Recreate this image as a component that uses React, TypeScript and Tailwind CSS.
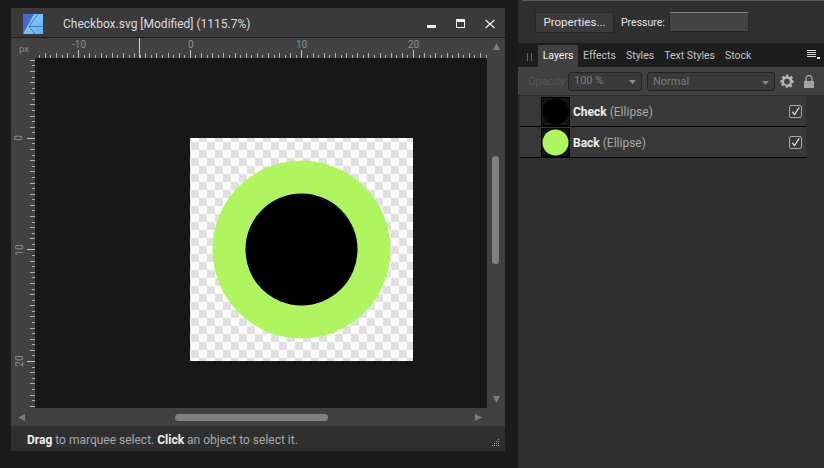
import React from "react";

const font = "font-['Roboto','Liberation_Sans',sans-serif]";
const unit = 11.157;

function HRuler() {
  const ticks: React.ReactNode[] = [];
  for (let i = -28; i <= 53; i++) {
    const x = 155.4 + (i * unit) / 2;
    if (x < 0 || x > 452) continue;
    const len = i % 20 === 0 ? 8 : i % 2 === 0 ? 5 : 3;
    ticks.push(<line key={i} x1={x} x2={x} y1={20 - len} y2={20} stroke={i % 20 === 0 ? "#c4c4c4" : "#b0b0b0"} />);
  }
  return (
    <svg width="452" height="20" shapeRendering="crispEdges" className="absolute left-0 top-0">
      {ticks}
      <line x1="104.5" x2="104.5" y1="0" y2="20" stroke="#cfcfcf" />
    </svg>
  );
}

function VRuler() {
  const ticks: React.ReactNode[] = [];
  for (let i = -14; i <= 48; i++) {
    const y = 80.4 + (i * unit) / 2;
    if (y < 0 || y > 350) continue;
    const len = i % 20 === 0 ? 8 : i % 2 === 0 ? 5 : 3;
    ticks.push(<line key={i} x1={24 - len} x2={24} y1={y} y2={y} stroke={i % 20 === 0 ? "#c4c4c4" : "#b0b0b0"} />);
  }
  return (
    <svg width="24" height="350" shapeRendering="crispEdges" className="absolute left-0 top-0">
      {ticks}
    </svg>
  );
}

function Artboard() {
  return (
    <svg width="223" height="223" className="absolute left-[155px] top-[80px]">
      <defs>
        <pattern id="chk" width="16" height="16" patternUnits="userSpaceOnUse" patternTransform="translate(9 -4)">
          <rect width="16" height="16" fill="#ffffff" />
          <rect width="8" height="8" fill="#e0e0e0" />
          <rect x="8" y="8" width="8" height="8" fill="#e0e0e0" />
        </pattern>
      </defs>
      <rect width="223" height="223" fill="url(#chk)" />
      <circle cx="111.5" cy="111.5" r="89" fill="#aef55f" />
      <circle cx="111.5" cy="111.5" r="56" fill="#000000" />
    </svg>
  );
}

function Logo() {
  return (
    <svg width="20" height="20" viewBox="0 0 20 20" className="shrink-0">
      <defs>
        <linearGradient id="lg" x1="0" y1="0" x2="1" y2="1">
          <stop offset="0" stopColor="#8fd0ff" />
          <stop offset="1" stopColor="#62aef5" />
        </linearGradient>
      </defs>
      <rect width="20" height="20" fill="url(#lg)" />
      <path d="M0 0H11L0 20Z" fill="#4469c9" />
      <path d="M15 0L6 12.5L12 20M6 12.5H20" fill="none" stroke="#3f78b8" strokeWidth="1" />
    </svg>
  );
}

function Tri({ dir, className }: { dir: "u" | "d" | "l" | "r"; className: string }) {
  const d = { u: "M0 7L3.5 0L7 7Z", d: "M0 0H7L3.5 7Z", l: "M7 0V7L0 3.5Z", r: "M0 0V7L7 3.5Z" }[dir];
  return (
    <svg width="7" height="7" viewBox="0 0 7 7" className={className}>
      <path d={d} fill="#7c7c7c" />
    </svg>
  );
}

function Caret() {
  return (
    <svg width="7" height="4" viewBox="0 0 7 4" className="shrink-0">
      <path d="M0 0H7L3.5 4Z" fill="#8a8a8a" />
    </svg>
  );
}

function Check() {
  return (
    <svg width="13" height="13" viewBox="0 0 13 13" className="shrink-0">
      <rect x="0.5" y="0.5" width="12" height="12" rx="1.5" fill="none" stroke="#a8a8a8" />
      <path d="M3.2 6.6L5.5 9.6L10.2 2.4" fill="none" stroke="#d8d8d8" strokeWidth="1.3" />
    </svg>
  );
}

function Row({ name, color, border }: { name: string; color: string; border: string }) {
  return (
    <div className="flex h-[31px] w-[286px] shrink-0 items-center border-b border-black bg-[#383838] pl-[21px] pr-[4px] box-border">
      <div className={`flex h-[29px] w-[29px] shrink-0 items-center justify-center border border-black ${border}`}>
        <svg width="27" height="27">
          <circle cx="13.5" cy="13.5" r="13" fill={color} />
        </svg>
      </div>
      <div className="ml-[3px] flex-1 whitespace-nowrap pt-[2px] text-[12px] text-[#a9a9a9]">
        <span className="font-bold text-[#eeeeee]">{name}</span> (Ellipse)
      </div>
      <Check />
    </div>
  );
}

export default function App() {
  return (
    <div className={`${font} flex h-[468px] w-[824px] overflow-hidden bg-[#1b1b1b]`}>
      <div className="w-[518px] shrink-0 pl-[11px] pt-[8px]">
        <div className="flex h-[443px] w-[494px] flex-col">
          <div className="flex h-[30px] shrink-0 items-center border-b border-[#1e1e1e] bg-[#3a3a3a] pl-[12px] pr-[10px] pt-[2px]">
            <Logo />
            <div className="ml-[20px] flex-1 whitespace-nowrap text-[12px] text-[#dcdcdc]">Checkbox.svg [Modified] (1115.7%)</div>
            <div className="mr-[20px] mt-[6px] h-[3px] w-[9px] bg-[#f0f0f0]" />
            <div className="mr-[20px] h-[9px] w-[9px] border border-t-[3px] border-[#f0f0f0]" />
            <svg width="10" height="10" viewBox="0 0 10 10">
              <path d="M0.5 1L9.5 9M9.5 1L0.5 9" stroke="#f0f0f0" strokeWidth="1.2" fill="none" />
            </svg>
          </div>
          <div className="grid flex-1 grid-cols-[24px_452px_18px] grid-rows-[20px_350px_18px] bg-[#414141]">
            <div className="pl-[8px] pt-[5px] text-[9.5px] leading-[12px] text-[#8a8a8a]">px</div>
            <div className="relative text-[10px] leading-[12px] text-[#8f8f8f]">
              <HRuler />
              <span className="absolute left-[37px] top-[1px]">-10</span>
              <span className="absolute left-[153px] top-[1px]">0</span>
              <span className="absolute left-[261px] top-[1px]">10</span>
              <span className="absolute left-[373px] top-[1px]">20</span>
            </div>
            <div className="flex justify-center pt-[5px]">
              <Tri dir="u" className="mt-0" />
            </div>
            <div className="relative text-[10px] leading-[12px] text-[#8f8f8f]">
              <VRuler />
              <span className="absolute left-[5px] top-[74px] -rotate-90">0</span>
              <span className="absolute left-[3px] top-[186px] -rotate-90">10</span>
              <span className="absolute left-[3px] top-[297px] -rotate-90">20</span>
            </div>
            <div className="relative overflow-hidden bg-[#171717]">
              <Artboard />
            </div>
            <div className="flex flex-col items-center">
              <div className="ml-[-1px] mt-[98px] h-[108px] w-[7px] rounded-full bg-[#808080]" />
              <Tri dir="d" className="mt-[132px]" />
            </div>
            <div className="col-span-3 flex items-center pl-[7px] pr-[11px]">
              <Tri dir="l" />
              <div className="ml-[150px] h-[7px] w-[153px] rounded-full bg-[#808080]" />
              <Tri dir="r" className="ml-[147px] mt-[1px]" />
            </div>
          </div>
          <div className="flex h-[25px] shrink-0 items-center justify-between bg-[#2f2f2f] pl-[16px] pr-[5px] pt-[2px] text-[12px] text-[#a8a8a8]">
            <div className="whitespace-nowrap">
              <span className="font-bold text-[#f0f0f0]">Drag</span> to marquee select. <span className="font-bold text-[#f0f0f0]">Click</span> an object to select it.
            </div>
            <svg width="8" height="8" viewBox="0 0 8 8" className="mt-[7px]" shapeRendering="crispEdges">
              {[[6,0],[4,2],[6,2],[2,4],[4,4],[6,4],[0,6],[2,6],[4,6],[6,6]].map(([x, y]) => (
                <rect key={`${x}-${y}`} x={x} y={y} width="1" height="1" fill="#9a9a9a" />
              ))}
            </svg>
          </div>
        </div>
      </div>

      <div className="flex w-[306px] shrink-0 flex-col bg-[#2f2f2f] text-[11px]">
        <div className="ml-[4px] h-[1px] shrink-0 bg-[#5a5a5a]" />
        <div className="flex h-[42px] shrink-0 items-center pl-[17px]">
          <div className="flex h-[21px] w-[79px] items-center justify-center rounded-[2px] border border-[#262626] bg-[#3b3b3b] pt-[1px] text-[11.5px] text-[#e4e4e4]">Properties...</div>
          <div className="ml-[7px] w-[48px] whitespace-nowrap pt-[1px] text-[10.5px] text-[#e4e4e4]">Pressure:</div>
          <div className="h-[20px] w-[80px] rounded-[2px] border border-[#262626] border-t-[#8a8a8a] bg-[#434343]" />
        </div>
        <div className="flex h-[24px] shrink-0 items-end bg-[#1d1d1d] pl-[9px] text-[10.5px] text-[#c4c4c4]">
          <div className="mb-[6px] mr-[6px] h-[8px] w-[5px] border-x border-[#6a6a6a]" />
          <div className="flex h-[22px] w-[40px] items-center justify-center bg-[#414141] text-[#f0f0f0]">Layers</div>
          <div className="ml-[5px] flex h-[22px] items-center">Effects</div>
          <div className="ml-[10px] flex h-[22px] items-center">Styles</div>
          <div className="ml-[10px] flex h-[22px] items-center">Text Styles</div>
          <div className="ml-[10px] flex h-[22px] items-center">Stock</div>
          <svg width="13" height="9" viewBox="0 0 13 9" className="mb-[8px] ml-auto mr-[4px]" shapeRendering="crispEdges">
            <path d="M0 0H9V1H0ZM0 2H9V3H0ZM0 4H9V5H0ZM0 6H9V7H0ZM10 7H13V9H10Z" fill="#d8d8d8" />
          </svg>
        </div>
        <div className="flex h-[29px] shrink-0 items-center border-b border-[#2a2a2a] bg-[#414141] pl-[10px]">
          <div className="w-[40px] whitespace-nowrap pt-[2px] text-[#555555]">Opacity:</div>
          <div className="flex h-[19px] w-[74px] items-center justify-between rounded-[3px] border border-[#222222] bg-[#3a3a3a] px-[5px] pt-[1px] text-[#7c7c7c]">
            100 %<Caret />
          </div>
          <div className="ml-[5px] flex h-[19px] w-[128px] items-center justify-between rounded-[3px] border border-[#222222] bg-[#3a3a3a] px-[5px] pt-[3px] text-[#7c7c7c]">
            Normal<Caret />
          </div>
          <svg width="14" height="14" viewBox="0 0 24 24" className="ml-[5px]">
            <path
              fillRule="evenodd"
              d="M10 1h4l.7 3.2 1.9.8 2.8-1.8 2.8 2.8-1.8 2.8.8 1.9L23.4 11v4l-3.2.7-.8 1.9 1.8 2.8-2.8 2.8-2.8-1.8-1.9.8L13.9 23.4h-4l-.7-3.2-1.9-.8-2.8 1.8-2.8-2.8 1.8-2.8-.8-1.9L.5 15v-4l3.2-.7.8-1.9L2.7 5.6l2.8-2.8 2.8 1.8 1.9-.8ZM12 8a5 5 0 1 0 0 10 5 5 0 0 0 0-10Z"
              fill="#b4b4b4"
            />
          </svg>
          <svg width="10" height="13" viewBox="0 0 10 13" className="ml-[10px]">
            <path d="M0 6H10V13H0Z" fill="#a4a4a4" />
            <path d="M2 6V3.5a3 3 0 0 1 6 0V6" fill="none" stroke="#a4a4a4" strokeWidth="1.3" />
          </svg>
        </div>
        <div className="flex flex-col pl-[2px]">
          <Row name="Check" color="#000000" border="bg-[#141414]" />
          <Row name="Back" color="#aef55f" border="bg-[#141414]" />
        </div>
      </div>
    </div>
  );
}
